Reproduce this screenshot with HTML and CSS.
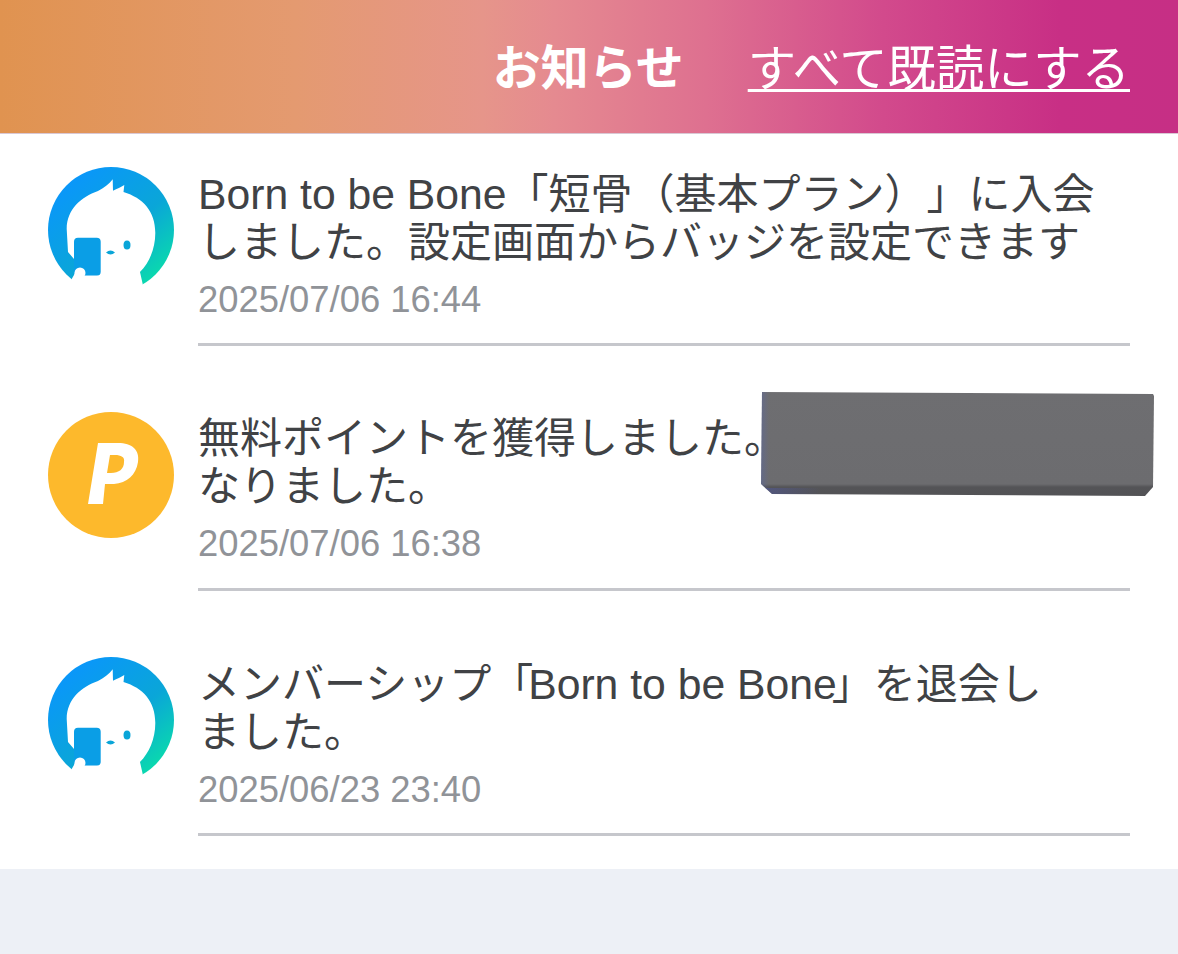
FILE: index.html
```html
<!DOCTYPE html>
<html lang="ja">
<head>
<meta charset="utf-8">
<title>お知らせ</title>
<link rel="stylesheet" href="styles.css">
</head>
<body>
<svg class="defs" width="0" height="0" aria-hidden="true">
  <defs>
    <linearGradient id="ring" x1="0.15" y1="0.1" x2="0.85" y2="0.95">
      <stop offset="0" stop-color="#0a96fb"/>
      <stop offset="0.55" stop-color="#0aa6d8"/>
      <stop offset="1" stop-color="#0ae0a8"/>
    </linearGradient>
    <symbol id="mascot" viewBox="0 0 126 126">
      <circle cx="63" cy="63" r="63" fill="url(#ring)"/>
      <path fill="#fff" d="M18.700 62C19 42 33 30 50 24C56 21 61 17 64.700 12.300L65 23.700C69 22 73 20 76.300 18L75.500 25C95 31 107.300 44 107.300 66C107.300 82 101 96 92 105L94.700 117V130H23.700V112L26 108V92L20 85Z"/>
      <rect x="26" y="70.700" width="26.700" height="38" rx="4" fill="#0a9ee6"/>
      <circle cx="32" cy="106" r="5.500" fill="#fff"/>
      <rect x="26" y="108.700" width="27" height="6" fill="#fff"/>
      <ellipse cx="79" cy="78" rx="3.500" ry="4.500" fill="#0aa5d8"/>
      <path fill="#0aa5d8" d="M58 85.500Q62.500 81.500 67 85.500Q62.500 89.500 58 85.500Z"/>
    </symbol>
  </defs>
</svg>
<main class="page">
  <header class="topbar">
    <h1 class="title">お知らせ</h1>
    <a class="read-all" href="#">すべて既読にする</a>
  </header>
  <ul class="list">
    <li class="item">
      <svg class="avatar"><use href="#mascot"/></svg>
      <div class="body">
        <p class="msg"><span class="latin">Born to be Bone</span>「短骨（基本プラン）」に入会<br>しました。設定画面からバッジを設定できます</p>
        <time class="stamp">2025/07/06 16:44</time>
      </div>
    </li>
    <li class="item">
      <svg class="avatar" viewBox="0 0 126 126">
        <circle cx="63" cy="63" r="63" fill="#fdb92c"/>
        <path fill="#fff" fill-rule="evenodd" d="M50 31H70C84 31 92 38 90 50C88 63 79 71 66 72H57L55 92H40ZM62 43L59 61H63C71 61 76 57 76 50C77 45 73 43 67 43Z"/>
      </svg>
      <div class="body">
        <p class="msg">無料ポイントを獲得しました。<br>なりました。</p>
        <time class="stamp">2025/07/06 16:38</time>
      </div>
      <div class="redact"></div>
    </li>
    <li class="item">
      <svg class="avatar"><use href="#mascot"/></svg>
      <div class="body">
        <p class="msg">メンバーシップ「<span class="latin latin-inner">Born to be Bone</span>」を退会し<br>ました。</p>
        <time class="stamp">2025/06/23 23:40</time>
      </div>
    </li>
  </ul>
</main>
</body>
</html>
```
FILE: styles.css
```css
* { box-sizing: border-box; }
html, body { margin: 0; padding: 0; }
body {
  background: #edf0f6;
  font-family: "Liberation Sans", "Noto Sans CJK JP", sans-serif;
  height: 954px;
  overflow: hidden;
}
.defs { display: block; height: 0; }
.topbar {
  height: 134px;
  display: flex;
  justify-content: flex-end;
  align-items: flex-start;
  gap: 64px;
  padding: 38px 48px 0 0;
  background: linear-gradient(90deg, #e09350 0%, #e49a70 25%, #e6958a 41%, #e58a90 47%, #de7090 60%, #d24a8c 75%, #c82f85 90%, #c62f85 100%);
  border-bottom: 1px solid #d9c8d4;
  color: #fff;
}
.title { margin: 0; font-size: 48px; line-height: 62px; font-weight: 700; }
.read-all { color: #fff; font-size: 48.400px; line-height: 62px; text-decoration: underline; text-decoration-thickness: 3px; text-underline-offset: 3px; }
.list { list-style: none; margin: 0; padding: 0; background: #fff; }
.item { position: relative; display: flex; height: 245px; padding: 33px 48px 0; gap: 24px; }
.avatar { width: 126px; height: 126px; flex: none; }
.body { flex: 1; height: 179px; padding-top: 3px; border-bottom: 3px solid #c6c7cc; min-width: 0; }
.msg { margin: 0; font-size: 42px; line-height: 48px; color: #404245; text-spacing-trim: space-all; font-feature-settings: "chws" 0; }
.latin { font-size: 42.700px; }
.latin-inner { margin-left: -5px; margin-right: -5px; }
.stamp { display: block; margin-top: 12px; font-size: 36.400px; line-height: 42px; color: #909398; }
.redact {
  position: absolute;
  left: 761px;
  top: 13px;
  width: 394px;
  height: 105px;
  background:
    linear-gradient(90deg, rgba(80, 100, 190, 0.3) 0, rgba(80, 100, 190, 0) 8px) no-repeat,
    linear-gradient(90deg, rgba(80, 90, 170, 0.5) 0, rgba(80, 90, 170, 0) 60px) 0 100% / 100% 9px no-repeat,
    linear-gradient(180deg, #6e6e71 0, #6c6c6f 92px, #545457 95px, #525255 100%);
  clip-path: polygon(1px 0, 392px 2px, 393px 4px, 392px 95px, 384px 104px, 11px 102px, 0 92px);
}
```
